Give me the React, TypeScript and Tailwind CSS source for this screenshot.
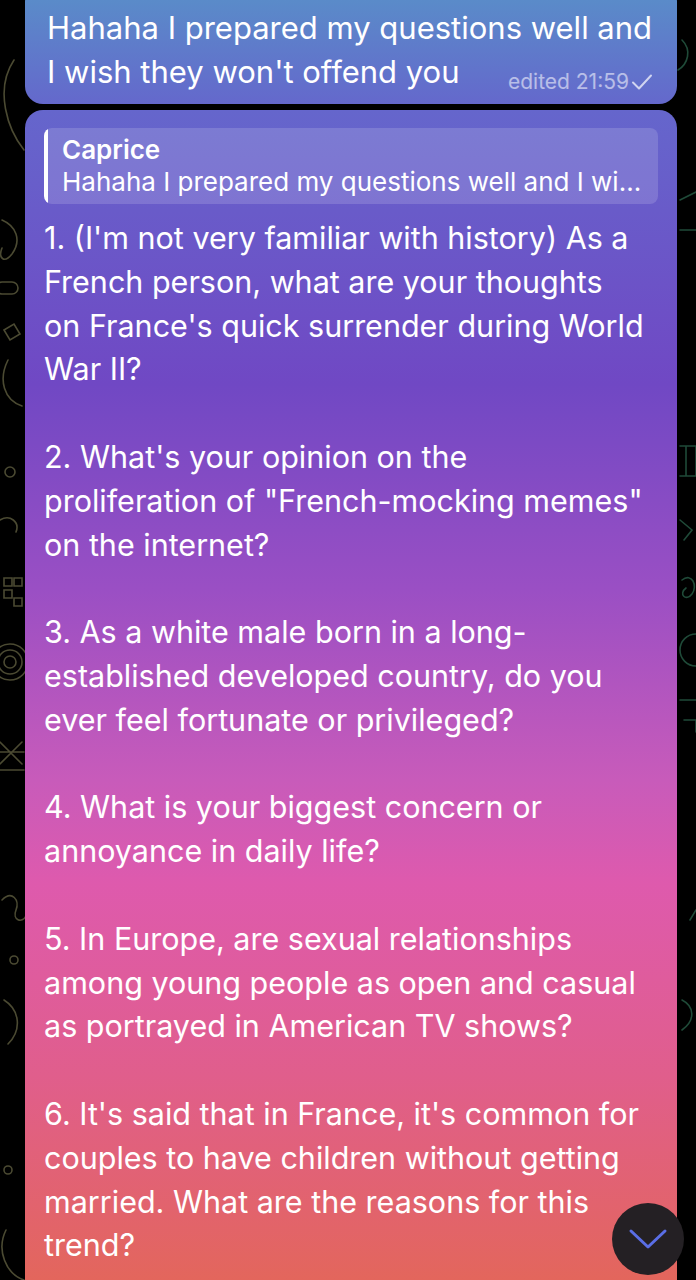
const chatGradient =
  "bg-[linear-gradient(180deg,#5a8bc9_0%,#6566cc_8.6%,#7048c4_30%,#9a4fc4_46%,#c85bba_61%,#de5aad_69%,#e05e8c_84%,#e3665c_100%)] bg-fixed";

const lines = [
  "1. (I'm not very familiar with history) As a",
  "French person, what are your thoughts",
  "on France's quick surrender during World",
  "War II?",
  "",
  "2. What's your opinion on the",
  'proliferation of "French-mocking memes"',
  "on the internet?",
  "",
  "3. As a white male born in a long-",
  "established developed country, do you",
  "ever feel fortunate or privileged?",
  "",
  "4. What is your biggest concern or",
  "annoyance in daily life?",
  "",
  "5. In Europe, are sexual relationships",
  "among young people as open and casual",
  "as portrayed in American TV shows?",
  "",
  "6. It's said that in France, it's common for",
  "couples to have children without getting",
  "married. What are the reasons for this",
  "trend?",
];

// faint wallpaper doodles on the dark edges
const Doodles = () => (
  <svg className="absolute inset-0 h-full w-full" viewBox="0 0 696 1280" fill="none" strokeWidth="1.6" strokeLinecap="round">
    <g stroke="#4b4a32">
      <path d="M14 60 C-6 90 8 130 24 150" />
      <path d="M2 220 c14 6 20 20 10 34 c-8 10 -14 4 -10 -6" />
      <rect x="-4" y="282" width="22" height="12" rx="6" />
      <path d="M4 330 l10 -6 l6 10 l-10 6 z M8 360 c-10 20 -4 40 14 46" />
      <circle cx="10" cy="472" r="5" />
      <path d="M0 520 c10 -6 20 2 16 12" />
      <path d="M4 578 h8 v8 h-8 z M14 578 h8 v8 h-8 z M4 590 h8 v8 h-8 z M14 598 h8 v8 h-8 z" />
      <circle cx="10" cy="662" r="18" />
      <circle cx="10" cy="662" r="12" />
      <circle cx="10" cy="662" r="6" />
      <path d="M0 742 l22 22 M22 742 l-22 22 M-2 752 h26 M-2 770 h26" />
      <path d="M2 900 c10 -10 18 0 14 10 c-4 10 6 14 10 6" />
      <circle cx="14" cy="960" r="4" />
      <path d="M4 1000 c16 10 18 30 4 44" />
      <circle cx="8" cy="1170" r="4" />
      <path d="M6 1230 c-10 20 0 44 18 50" />
    </g>
    <g stroke="#1f4a38">
      <path d="M682 40 c10 10 6 24 -4 30" />
      <path d="M680 200 l16 -8 M680 230 h16" />
      <path d="M680 446 h16 v30 h-16 M686 446 v30" />
      <path d="M680 520 l12 10 l-8 10" />
      <path d="M682 580 c10 -8 16 6 10 14 c-6 8 -14 0 -6 -6" />
      <circle cx="696" cy="650" r="16" />
      <path d="M680 700 h16 M684 720 h12 v12" />
      <path d="M690 920 l6 -10 M682 1000 c12 6 14 20 0 30" />
    </g>
  </svg>
);

const ScrollDownButton = () => (
  <div className="absolute right-[12px] top-[1203px] flex h-[72px] w-[72px] items-center justify-center rounded-full bg-[#242024]">
    <svg width="40" height="24" viewBox="0 0 40 24" fill="none">
      <path d="M3 4 L20 20 L37 4" stroke="#5a6ee6" strokeWidth="3" strokeLinecap="round" strokeLinejoin="round" />
    </svg>
  </div>
);

export default function App() {
  return (
    <div className="relative h-[1280px] w-[696px] overflow-hidden bg-black font-['Inter','Roboto',sans-serif] text-white">
      <Doodles />

      <div className="relative flex flex-col gap-[6px] pl-[25px] pr-[19px]">
        {/* previous message, cut off at the top */}
        <div className={`-mt-[16px] rounded-[18px] pb-[10px] pl-[22px] pr-[24px] pt-[22px] ${chatGradient}`}>
          <div className="whitespace-nowrap text-[31px] leading-[44px]">
            Hahaha I prepared my questions well and
          </div>
          <div className="flex items-end justify-between">
            <span className="whitespace-nowrap text-[31px] leading-[44px]">
              I wish they won't offend you
            </span>
            <span className="flex items-center gap-[2px] text-[21px] leading-[24px] text-white/55">
              edited 21:59
              <svg width="22" height="18" viewBox="0 0 22 18" fill="none">
                <path d="M2 9.5 L8 15.5 L20 2.5" stroke="white" strokeOpacity="0.7" strokeWidth="2" strokeLinecap="round" strokeLinejoin="round" />
              </svg>
            </span>
          </div>
        </div>

        {/* long question message */}
        <div className={`rounded-[18px] px-[19px] pt-[18px] pb-[40px] ${chatGradient}`}>
          <div className="flex h-[76px] overflow-hidden rounded-[8px] bg-white/15">
            <div className="w-[4px] shrink-0 rounded-l-[8px] bg-white" />
            <div className="flex min-w-0 flex-col justify-center pl-[14px] pr-[10px]">
              <div className="text-[26px] font-semibold leading-[32px]">Caprice</div>
              <div className="truncate text-[26px] leading-[32px]">
                Hahaha I prepared my questions well and I wi...
              </div>
            </div>
          </div>
          <div className="mt-[12px] text-[30.5px] leading-[43.8px]">
            {lines.map((line, i) => (
              <div key={i} className="h-[43.8px] whitespace-nowrap">
                {line}
              </div>
            ))}
          </div>
        </div>
      </div>

      <ScrollDownButton />
    </div>
  );
}
